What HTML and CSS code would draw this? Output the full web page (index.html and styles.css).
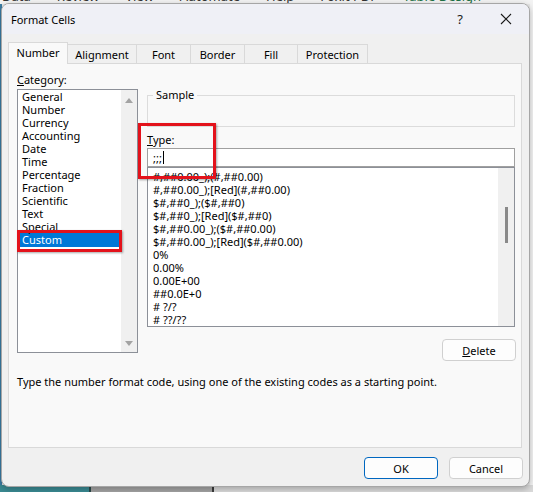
FILE: index.html
```html
<!DOCTYPE html>
<html lang="en">
<head>
    <meta charset="UTF-8">
    <title>Format Cells</title>
    <link rel="stylesheet" href="styles.css">
</head>
<body>
    <div class="desk">
        <div class="ribbon">
            <span>Data</span><span>Review</span><span>View</span><span>Automate</span><span>Help</span><span>Foxit PDF</span><span class="green">Table Design</span>
        </div>
        <div class="desk-mid"></div>
        <div class="desk-bottom">
            <div class="seg teal"></div>
            <div class="seg grey"></div>
            <div class="seg light"></div>
        </div>
    </div>

    <div class="dialog">
        <div class="titlebar">
            <span class="title">Format Cells</span>
            <span class="cap-btn">?</span>
            <span class="cap-btn">
                <svg width="12" height="12" viewBox="0 0 12 12"><path d="M1 1L11 11M11 1L1 11" stroke="#1a1a1a" stroke-width="1.1" fill="none"/></svg>
            </span>
        </div>

        <div class="dlg-body">
            <div class="tabs">
                <div class="tab active" style="width:60px">Number</div>
                <div class="tab" style="width:70px">Alignment</div>
                <div class="tab" style="width:55px">Font</div>
                <div class="tab" style="width:55px">Border</div>
                <div class="tab" style="width:54px">Fill</div>
                <div class="tab" style="width:71px">Protection</div>
            </div>

            <div class="tab-panel">
                <div class="col-left">
                    <div class="lbl"><u>C</u>ategory:</div>
                    <div class="listbox cat-list">
                        <div class="items">
                            <div class="item">General</div>
                            <div class="item">Number</div>
                            <div class="item">Currency</div>
                            <div class="item">Accounting</div>
                            <div class="item">Date</div>
                            <div class="item">Time</div>
                            <div class="item">Percentage</div>
                            <div class="item">Fraction</div>
                            <div class="item">Scientific</div>
                            <div class="item">Text</div>
                            <div class="item">Special</div>
                            <div class="item selected">Custom</div>
                        </div>
                        <div class="vscroll">
                            <span class="arrow up"></span>
                            <span class="arrow down"></span>
                        </div>
                    </div>
                </div>

                <div class="col-right">
                    <div class="sample"><span class="legend">Sample</span></div>
                    <div class="lbl type-lbl"><u>T</u>ype:</div>
                    <div class="type-input">;;;<span class="caret"></span></div>
                    <div class="listbox code-list">
                        <div class="items">
                            <div class="item">#,##0.00_);(#,##0.00)</div>
                            <div class="item">#,##0.00_);[Red](#,##0.00)</div>
                            <div class="item">$#,##0_);($#,##0)</div>
                            <div class="item">$#,##0_);[Red]($#,##0)</div>
                            <div class="item">$#,##0.00_);($#,##0.00)</div>
                            <div class="item">$#,##0.00_);[Red]($#,##0.00)</div>
                            <div class="item">0%</div>
                            <div class="item">0.00%</div>
                            <div class="item">0.00E+00</div>
                            <div class="item">##0.0E+0</div>
                            <div class="item"># ?/?</div>
                            <div class="item"># ??/??</div>
                        </div>
                        <div class="vscroll">
                            <span class="thumb"></span>
                        </div>
                    </div>
                    <div class="delete-row">
                        <button class="btn"><u>D</u>elete</button>
                    </div>
                </div>

                <div class="hint">Type the number format code, using one of the existing codes as a starting point.</div>

                <div class="mark mark-custom"></div>
                <div class="mark mark-type"></div>
            </div>

            <div class="btn-row">
                <button class="btn btn-ok">OK</button>
                <button class="btn">Cancel</button>
            </div>
        </div>
    </div>
</body>
</html>
```

FILE: styles.css
```css
body {
    margin: 0;
    width: 533px;
    height: 492px;
    overflow: hidden;
    position: relative;
    font-family: "Noto Sans", "Open Sans", sans-serif;
    color: #000;
}

/* excel behind the dialog */
.desk {
    height: 492px;
    display: flex;
    flex-direction: column;
    background: #f3f3f3;
}

.ribbon {
    height: 4px;
    overflow: hidden;
    display: flex;
    gap: 26px;
    font-size: 13px;
    line-height: 14px;
    color: #333;
    padding-left: 2px;
}

.ribbon span {
    margin-top: -11px;
}

.ribbon .green {
    color: #1e7145;
}

.desk-mid {
    flex: 1;
    border-left: 2px solid #3a7ca5;
    background: linear-gradient(#f3f3f3, #f3f3f3) right / 3px 100% no-repeat, #e8e8e8;
}

.desk-bottom {
    height: 7px;
    display: flex;
}

.seg.teal {
    width: 89px;
    background: #3a8a92;
    border-right: 2px solid #2b4a4a;
}

.seg.grey {
    width: 121px;
    background: #a3a3a3;
    border-right: 2px solid #3a3a3a;
}

.seg.light {
    flex: 1;
    background: #d9d9d9;
}

/* dialog window */
.dialog {
    position: absolute;
    left: 1px;
    top: 3px;
    width: 529px;
    height: 484px;
    box-sizing: border-box;
    border: 1px solid #a6a6a6;
    border-radius: 8px;
    background: #f0f0f0;
    overflow: hidden;
    box-shadow: 0 2px 6px rgba(0, 0, 0, 0.25);
    display: flex;
    flex-direction: column;
}

.titlebar {
    height: 30px;
    flex-shrink: 0;
    background: #eff0f6;
    display: flex;
    align-items: center;
    font-size: 11px;
    padding-left: 9px;
}

.title {
    flex: 1;
}

.cap-btn {
    width: 46px;
    height: 30px;
    display: flex;
    align-items: center;
    justify-content: center;
    font-size: 13px;
    color: #1a1a1a;
}

.dlg-body {
    flex: 1;
    padding: 8px 7px 0 6px;
    font-size: 11px;
}

.tabs {
    display: flex;
    align-items: flex-end;
    height: 21px;
    position: relative;
    z-index: 1;
}

.tab {
    height: 19px;
    box-sizing: border-box;
    border: 1px solid #d9d9d9;
    border-bottom: none;
    margin-right: -1px;
    background: #f0f0f0;
    display: flex;
    align-items: center;
    justify-content: center;
    padding-top: 1px;
}

.tab.active {
    height: 22px;
    margin-bottom: -1px;
    background: #f9f9f9;
    padding-top: 0;
    padding-bottom: 2px;
}

.tab-panel {
    height: 385px;
    box-sizing: border-box;
    border: 1px solid #d9d9d9;
    background: #f9f9f9;
    position: relative;
    display: grid;
    grid-template-columns: 121px 368px;
    grid-template-rows: auto auto;
    column-gap: 9px;
    align-content: start;
    padding: 9px 0 0 8px;
}

.lbl {
    line-height: 14px;
    height: 14px;
}

.listbox {
    box-sizing: border-box;
    border: 1px solid #8c9098;
    background: #fff;
    display: flex;
}

.listbox .items {
    flex: 1;
    line-height: 13px;
    white-space: nowrap;
    overflow: hidden;
}

.cat-list {
    margin-top: 2px;
    height: 264px;
}

.cat-list .items {
    padding-top: 0;
}

.cat-list .item {
    padding-left: 3px;
    margin: 0 1px;
}

.cat-list .item.selected {
    background: #0078d7;
    color: #fff;
    height: 14px;
    line-height: 14px;
}

.vscroll {
    width: 16px;
    background: #f0f0f0;
    position: relative;
}

.arrow {
    position: absolute;
    left: 4px;
    width: 0;
    height: 0;
    border-left: 4px solid transparent;
    border-right: 4px solid transparent;
}

.arrow.up {
    top: 8px;
    border-bottom: 5px solid #a3a3a3;
}

.arrow.down {
    bottom: 6px;
    border-top: 5px solid #a3a3a3;
}

.thumb {
    position: absolute;
    left: 7px;
    top: 39px;
    width: 3px;
    height: 36px;
    background: #8a8a8a;
}

.sample {
    margin-top: 22px;
    height: 32px;
    box-sizing: border-box;
    border: 1px solid #dcdcdc;
    position: relative;
}

.legend {
    position: absolute;
    top: -8px;
    left: 5px;
    padding: 0 3px;
    line-height: 14px;
    background: #f9f9f9;
}

.type-lbl {
    margin-top: 6px;
}

.type-input {
    margin-top: 1px;
    height: 19px;
    box-sizing: border-box;
    border: 1px solid #a0a0a0;
    background: #fff;
    padding-left: 5px;
    line-height: 17px;
    display: flex;
    align-items: center;
}

.caret {
    width: 1px;
    height: 13px;
    background: #000;
    margin-left: 1px;
}

.code-list {
    height: 160px;
}

.code-list .items {
    padding: 2px 0 0 5px;
}

.delete-row {
    display: flex;
    justify-content: flex-end;
    margin-top: 12px;
    margin-right: -1px;
}

.btn {
    font-family: inherit;
    font-size: 11px;
    width: 74px;
    height: 22px;
    box-sizing: border-box;
    border: 1px solid #d0d0d0;
    border-radius: 4px;
    background: #fdfdfd;
    color: #000;
    padding: 0;
}

.hint {
    grid-column: 1 / 3;
    margin-top: 14px;
    line-height: 14px;
}

.btn-row {
    display: flex;
    justify-content: flex-end;
    gap: 11px;
    margin-top: 9px;
    margin-right: -1px;
}

.btn-ok {
    border-color: #0067c0;
}

/* red highlight marks drawn over the screenshot */
.mark {
    position: absolute;
    box-sizing: border-box;
    border: 3px solid #e3121b;
    box-shadow: 1px 1px 2px rgba(0, 0, 0, 0.35);
}

.mark-custom {
    left: 8px;
    top: 166px;
    width: 105px;
    height: 22px;
}

.mark-type {
    left: 129px;
    top: 59px;
    width: 78px;
    height: 56px;
}
```
